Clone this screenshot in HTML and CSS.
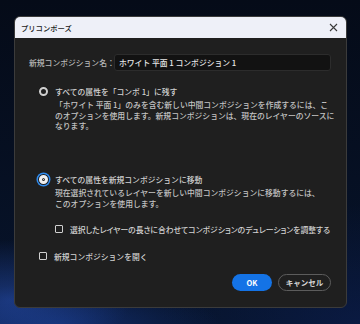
FILE: index.html
```html
<!DOCTYPE html>
<html lang="ja">
<head>
    <meta charset="UTF-8">
    <title>プリコンポーズ</title>
    <link rel="stylesheet" href="styles.css">
</head>
<body>

    <div class="dialog">
        <div class="titlebar">
            <span class="title">プリコンポーズ</span>
            <svg class="close" width="9" height="9" viewBox="0 0 9 9">
                <path d="M1 1L8 8M8 1L1 8" stroke="#3a3a3a" stroke-width="1.1" fill="none"/>
            </svg>
        </div>

        <div class="content">
            <div class="name-row">
                <label for="comp-name">新規コンポジション名：</label>
                <div class="field" id="comp-name">ホワイト 平面 1 コンポジション 1</div>
            </div>

            <div class="option first">
                <span class="radio"></span>
                <span class="option-label">すべての属性を「コンポ 1」に残す</span>
            </div>
            <p class="desc">「ホワイト 平面 1」のみを含む新しい中間コンポジションを作成するには、こ<br>のオプションを使用します。新規コンポジションは、現在のレイヤーのソースに<br>なります。</p>

            <div class="option second">
                <span class="radio checked"></span>
                <span class="option-label">すべての属性を新規コンポジションに移動</span>
            </div>
            <p class="desc tight">現在選択されているレイヤーを新しい中間コンポジションに移動するには、<br>このオプションを使用します。</p>

            <div class="option check-row nested">
                <span class="checkbox"></span>
                <span class="option-label narrow">選択したレイヤーの長さに合わせてコンポジションのデュレーションを調整する</span>
            </div>

            <div class="option check-row">
                <span class="checkbox"></span>
                <span class="option-label">新規コンポジションを開く</span>
            </div>

            <div class="actions">
                <button class="btn primary">OK</button>
                <button class="btn secondary">キャンセル</button>
            </div>
        </div>
    </div>

</body>
</html>
```

FILE: styles.css
```css
html, body {
    margin: 0;
    height: 100%;
}

body {
    font-family: "Noto Sans CJK JP", "Noto Sans", sans-serif;
    background-color: #06101f;
    background-image:
        radial-gradient(ellipse 120px 60px at 10px 300px, rgba(40, 80, 180, 0.55), transparent),
        radial-gradient(ellipse 160px 40px at 60px 324px, rgba(30, 70, 170, 0.5), transparent),
        radial-gradient(ellipse 200px 120px at 360px 324px, rgba(12, 30, 80, 0.6), transparent),
        linear-gradient(180deg, #050b18 0%, #07142c 100%);
    padding: 16px 13px 0 14px;
    box-sizing: border-box;
}

.dialog {
    width: 333px;
    height: 292px;
    box-sizing: border-box;
    background-color: #1f1f1f;
    border: 1px solid #3b3b3b;
    border-radius: 6px;
    overflow: hidden;
}

.titlebar {
    height: 21px;
    background-color: #eef0f8;
    display: flex;
    align-items: center;
    justify-content: space-between;
    padding: 0 8px 0 6px;
}

.title {
    font-size: 7.3px;
    font-weight: 500;
    color: #1b1b1b;
}

.content {
    padding: 16px 15px 0 14px;
    font-size: 7.8px;
    font-weight: 500;
    color: #c8c8c8;
    white-space: nowrap;
}

.name-row {
    display: flex;
    align-items: center;
    height: 17px;
}

.name-row label {
    width: 85px;
    color: #b8b8b8;
}

.field {
    width: 217px;
    height: 17px;
    box-sizing: border-box;
    background-color: #121212;
    border: 1px solid #2c2c2c;
    border-radius: 3px;
    padding-left: 4px;
    line-height: 15px;
    color: #e6e6e6;
}

.option {
    display: flex;
    align-items: center;
    height: 12px;
    margin-left: 10px;
    gap: 7px;
}

.option.first {
    margin-top: 14px;
}

.option.second {
    margin-top: 41px;
}

.option-label {
    color: #d2d2d2;
}

.option-label.narrow {
    font-feature-settings: "palt";
}

.radio {
    flex: none;
    width: 9px;
    height: 9px;
    box-sizing: border-box;
    border: 2px solid #cfcfcf;
    border-radius: 50%;
}

.radio.checked {
    border: 3px solid #f0f0f0;
    box-shadow: inset 0 0 0 1px #1f1f1f, 0 0 0 1px #1f1f1f, 0 0 0 2.5px #2f8cf0;
    background-image: radial-gradient(circle, #f0f0f0 0 1.2px, #1f1f1f 1.6px);
}

.desc {
    margin: 3px 0 0 26px;
    line-height: 10.7px;
    color: #c4c4c4;
}

.desc.tight {
    margin-top: 2px;
    line-height: 11px;
}

.checkbox {
    flex: none;
    width: 8px;
    height: 8px;
    box-sizing: border-box;
    border: 1.5px solid #d0d0d0;
    border-radius: 1px;
}

.check-row {
    margin-top: 15px;
}

.check-row.nested {
    margin-left: 26px;
    margin-top: 14px;
}

.actions {
    display: flex;
    justify-content: flex-end;
    gap: 6px;
    margin-top: 12px;
}

.btn {
    font-family: "Noto Sans CJK JP", "Noto Sans", sans-serif;
    font-size: 7.5px;
    font-weight: bold;
    height: 17px;
    border-radius: 9px;
    padding: 0;
    cursor: pointer;
}

.btn.primary {
    width: 40px;
    border: none;
    background-color: #1473e6;
    color: #ffffff;
}

.btn.secondary {
    width: 53px;
    background-color: transparent;
    border: 1px solid #5c5c5c;
    color: #d6d6d6;
}
```
